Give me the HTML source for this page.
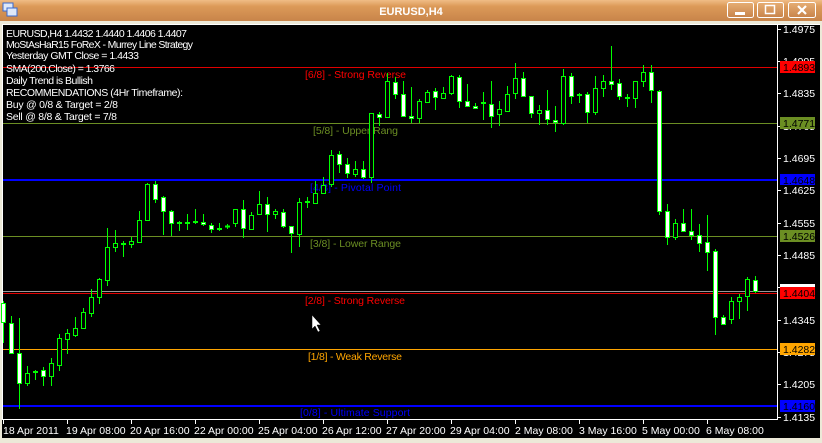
<!DOCTYPE html>
<html><head><meta charset="utf-8"><style>
html,body{margin:0;padding:0;background:#ece9d8;}
svg{display:block;font-family:"Liberation Sans",sans-serif;}
</style></head><body>
<svg width="822" height="443" viewBox="0 0 822 443" xmlns="http://www.w3.org/2000/svg">
<defs>
<linearGradient id="tb" x1="0" y1="0" x2="0" y2="1">
<stop offset="0" stop-color="#f0bd86"/><stop offset="0.3" stop-color="#dc9a58"/><stop offset="1" stop-color="#c8844a"/>
</linearGradient>
<linearGradient id="bt" x1="0" y1="0" x2="0" y2="1">
<stop offset="0" stop-color="#e6ae74"/><stop offset="1" stop-color="#c8834a"/>
</linearGradient>
</defs>
<rect x="0" y="0" width="822" height="443" fill="#ece9d8"/>
<rect x="0" y="0" width="822" height="21" fill="url(#tb)"/>
<!-- icon -->
<rect x="3" y="3" width="10" height="8" fill="#dfe8f8" stroke="#3a6ad0" stroke-width="1"/>
<rect x="7" y="8" width="10" height="8" fill="#dfe8f8" stroke="#3a6ad0" stroke-width="1"/>
<text x="411" y="15" fill="#fff" font-size="11" font-weight="bold" text-anchor="middle">EURUSD,H4</text>
<!-- buttons -->
<rect x="727.5" y="2.5" width="26" height="15" rx="2" fill="url(#bt)" stroke="#fff"/>
<rect x="735" y="12" width="10" height="3" fill="#fff"/>
<rect x="757.5" y="2.5" width="26" height="15" rx="2" fill="url(#bt)" stroke="#fff"/>
<rect x="765.5" y="5.5" width="9" height="8" fill="none" stroke="#fff" stroke-width="1.5"/>
<rect x="788.5" y="2.5" width="27" height="15" rx="2" fill="url(#bt)" stroke="#fff"/>
<path d="M798 6L806 14M806 6L798 14" stroke="#fff" stroke-width="2.2"/>
<!-- chart area -->
<rect x="2" y="24" width="818" height="414" fill="#000"/>
<path d="M2.5 24V420M2 24.5H820" stroke="#fff" stroke-width="1"/>
<path d="M777.5 25V420M2 419.5H778" stroke="#fff" stroke-width="1"/>
<!-- level lines -->
<g stroke-width="1">
<line x1="3" y1="67.5" x2="777" y2="67.5" stroke="#e00000"/>
<line x1="3" y1="123.5" x2="777" y2="123.5" stroke="#6b8e23"/>
<line x1="3" y1="180" x2="777" y2="180" stroke="#0000ff" stroke-width="2"/>
<line x1="3" y1="236.5" x2="777" y2="236.5" stroke="#6b8e23"/>
<line x1="3" y1="291.5" x2="777" y2="291.5" stroke="#999"/>
<line x1="3" y1="293.5" x2="777" y2="293.5" stroke="#e00000"/>
<line x1="3" y1="349.5" x2="777" y2="349.5" stroke="#ffa500"/>
<line x1="3" y1="406" x2="777" y2="406" stroke="#0000ff" stroke-width="2"/>
</g>
<!-- level labels -->
<g font-size="10.5">
<text x="305" y="78" fill="#ff0000" textLength="101">[6/8] - Strong Reverse</text>
<text x="313" y="134" fill="#6b8e23" textLength="85">[5/8] - Upper Rang</text>
<text x="310" y="191" fill="#0000ff" textLength="91">[4/8] - Pivotal Point</text>
<text x="310" y="247" fill="#6b8e23" textLength="91">[3/8] - Lower Range</text>
<text x="305" y="304" fill="#ff0000" textLength="100">[2/8] - Strong Reverse</text>
<text x="308" y="360" fill="#ffa500" textLength="94">[1/8] - Weak Reverse</text>
<text x="300" y="416" fill="#0000ff" textLength="110">[0/8] - Ultimate Support</text>
</g>
<!-- candles wicks -->
<path stroke="#00ff00" stroke-width="1" fill="none" d="M3.5 301V343M11.5 316V354M19.5 318V409M27.5 366V386M35.5 370V380M43.5 367V386M51.5 358V386M59.5 334V371M67.5 329V354M75.5 317V337M83.5 308V329M91.5 289V317M99.5 278V304M107.5 228V286M115.5 230V252M123.5 241V257M131.5 237V248M139.5 211V243M147.5 183V221M155.5 181V203M163.5 196V235M171.5 210V236M179.5 221V231M187.5 214V230M195.5 209V224M203.5 214V226M211.5 223V233M219.5 223V231M227.5 224V229M235.5 209V227M243.5 200V238M251.5 212V230M259.5 191V214M267.5 197V232M275.5 209V219M283.5 209V228M291.5 226V253M299.5 198V247M307.5 197V208M315.5 181V203M323.5 177V193M331.5 150V187M339.5 151V173M347.5 158V178M355.5 161V177M363.5 161V179M371.5 113V183M379.5 112V126M387.5 73V117M395.5 77V99M403.5 81V116M411.5 87V123M419.5 99V123M427.5 90V102M435.5 88V110M443.5 87V98M451.5 75V95M459.5 75V108M467.5 84V106M475.5 103V108M483.5 92V120M491.5 81V128M499.5 101V126M507.5 86V111M515.5 63V99M523.5 72V96M531.5 96V118M539.5 105V125M547.5 90V125M555.5 106V132M563.5 69V125M571.5 73V104M579.5 93V103M587.5 92V123M595.5 76V115M603.5 75V97M611.5 46V90M619.5 79V100M627.5 94V107M635.5 81V108M643.5 65V87M651.5 65V103M659.5 90V215M667.5 204V245M675.5 219V240M683.5 209V232M691.5 209V240M699.5 224V252M707.5 215V271M715.5 249V335M723.5 315V324M731.5 297V324M739.5 294V319M747.5 277V311M755.5 276V293"/>
<!-- bodies: green hollow -->
<g fill="#000" stroke="#00ff00" stroke-width="1">
<rect x="25.5" y="373.5" width="4" height="10"/>
<rect x="49.5" y="363.5" width="4" height="13"/>
<rect x="57.5" y="338.5" width="4" height="27"/>
<rect x="65.5" y="333.5" width="4" height="6"/>
<rect x="73.5" y="328.5" width="4" height="7"/>
<rect x="81.5" y="312.5" width="4" height="16"/>
<rect x="89.5" y="297.5" width="4" height="16"/>
<rect x="97.5" y="279.5" width="4" height="18"/>
<rect x="105.5" y="247.5" width="4" height="33"/>
<rect x="113.5" y="243.5" width="4" height="4"/>
<rect x="129.5" y="241.5" width="4" height="3"/>
<rect x="137.5" y="220.5" width="4" height="22"/>
<rect x="145.5" y="184.5" width="4" height="36"/>
<rect x="233.5" y="209.5" width="4" height="14"/>
<rect x="249.5" y="215.5" width="4" height="14"/>
<rect x="257.5" y="204.5" width="4" height="10"/>
<rect x="273.5" y="211.5" width="4" height="3"/>
<rect x="297.5" y="202.5" width="4" height="32"/>
<rect x="313.5" y="193.5" width="4" height="10"/>
<rect x="321.5" y="185.5" width="4" height="8"/>
<rect x="329.5" y="155.5" width="4" height="29"/>
<rect x="353.5" y="169.5" width="4" height="5"/>
<rect x="369.5" y="113.5" width="4" height="64"/>
<rect x="385.5" y="81.5" width="4" height="36"/>
<rect x="417.5" y="101.5" width="4" height="17"/>
<rect x="425.5" y="92.5" width="4" height="10"/>
<rect x="441.5" y="93.5" width="4" height="5"/>
<rect x="449.5" y="76.5" width="4" height="17"/>
<rect x="497.5" y="109.5" width="4" height="5"/>
<rect x="505.5" y="94.5" width="4" height="17"/>
<rect x="513.5" y="78.5" width="4" height="15"/>
<rect x="537.5" y="110.5" width="4" height="3"/>
<rect x="561.5" y="76.5" width="4" height="47"/>
<rect x="593.5" y="88.5" width="4" height="24"/>
<rect x="601.5" y="81.5" width="4" height="7"/>
<rect x="633.5" y="81.5" width="4" height="17"/>
<rect x="641.5" y="72.5" width="4" height="9"/>
<rect x="673.5" y="223.5" width="4" height="14"/>
<rect x="729.5" y="301.5" width="4" height="18"/>
<rect x="737.5" y="297.5" width="4" height="4"/>
<rect x="745.5" y="279.5" width="4" height="17"/>
</g>
<!-- flat green dojis -->
<path stroke="#00ff00" stroke-width="2" d="M33 372H38M121 244H126M177 223H182M185 223H190M193 222H198M217 229H222M225 226.5H230M305 202H310M481 103H486M577 95H582M625 98H630"/>
<!-- bodies: white -->
<g fill="#fff" stroke="#00ff00" stroke-width="1">
<rect x="1.5" y="303.5" width="4" height="19"/>
<rect x="9.5" y="323.5" width="4" height="30"/>
<rect x="17.5" y="353.5" width="4" height="30"/>
<rect x="41.5" y="370.5" width="4" height="6"/>
<rect x="153.5" y="184.5" width="4" height="15"/>
<rect x="161.5" y="197.5" width="4" height="14"/>
<rect x="169.5" y="211.5" width="4" height="12"/>
<rect x="201.5" y="222.5" width="4" height="2"/>
<rect x="209.5" y="225.5" width="4" height="4"/>
<rect x="241.5" y="209.5" width="4" height="19"/>
<rect x="265.5" y="204.5" width="4" height="10"/>
<rect x="281.5" y="212.5" width="4" height="14"/>
<rect x="289.5" y="226.5" width="4" height="7"/>
<rect x="337.5" y="154.5" width="4" height="10"/>
<rect x="345.5" y="164.5" width="4" height="9"/>
<rect x="361.5" y="169.5" width="4" height="8"/>
<rect x="377.5" y="114.5" width="4" height="3"/>
<rect x="393.5" y="82.5" width="4" height="12"/>
<rect x="401.5" y="94.5" width="4" height="22"/>
<rect x="409.5" y="116.5" width="4" height="2"/>
<rect x="433.5" y="91.5" width="4" height="6"/>
<rect x="457.5" y="77.5" width="4" height="24"/>
<rect x="465.5" y="101.5" width="4" height="5"/>
<rect x="473.5" y="106.5" width="4" height="2"/>
<rect x="489.5" y="104.5" width="4" height="12"/>
<rect x="521.5" y="78.5" width="4" height="18"/>
<rect x="529.5" y="96.5" width="4" height="17"/>
<rect x="545.5" y="110.5" width="4" height="9"/>
<rect x="553.5" y="120.5" width="4" height="2"/>
<rect x="569.5" y="76.5" width="4" height="20"/>
<rect x="585.5" y="94.5" width="4" height="18"/>
<rect x="609.5" y="81.5" width="4" height="3"/>
<rect x="617.5" y="83.5" width="4" height="13"/>
<rect x="649.5" y="72.5" width="4" height="18"/>
<rect x="657.5" y="91.5" width="4" height="120"/>
<rect x="665.5" y="211.5" width="4" height="26"/>
<rect x="681.5" y="223.5" width="4" height="8"/>
<rect x="689.5" y="231.5" width="4" height="4"/>
<rect x="697.5" y="235.5" width="4" height="8"/>
<rect x="705.5" y="242.5" width="4" height="10"/>
<rect x="713.5" y="251.5" width="4" height="66"/>
<rect x="721.5" y="317.5" width="4" height="7"/>
<rect x="753.5" y="280.5" width="4" height="11"/>
</g>
<!-- cursor -->
<path d="M312 315V329L315 326L318 332L320 331L317 325H321Z" fill="#fff" stroke="#000" stroke-width="0.5"/>
<!-- info text -->
<g fill="#fff" font-size="10.5">
<text x="6" y="37" textLength="181">EURUSD,H4  1.4432 1.4440 1.4406 1.4407</text>
<text x="6" y="48" textLength="187">MoStAsHaR15 FoReX - Murrey Line Strategy</text>
<text x="6" y="59" textLength="133">Yesterday GMT Close = 1.4433</text>
<text x="6" y="72" textLength="109">SMA(200,Close) = 1.3766</text>
<text x="6" y="84" textLength="87">Daily Trend is Bullish</text>
<text x="6" y="96" textLength="177">RECOMMENDATIONS (4Hr Timeframe):</text>
<text x="6" y="108" textLength="112">Buy  @ 0/8 &amp; Target = 2/8</text>
<text x="6" y="120" textLength="111">Sell @ 8/8 &amp; Target = 7/8</text>
</g>
<!-- price axis -->
<path stroke="#fff" stroke-width="1" d="M778 29.5H781M778 61.5H781M778 93.5H781M778 126.5H781M778 158.5H781M778 190.5H781M778 223.5H781M778 255.5H781M778 287.5H781M778 320.5H781M778 352.5H781M778 384.5H781M778 417.5H781"/>
<g fill="#fff" font-size="10.5">
<text x="783" y="33">1.4975</text>
<text x="783" y="65">1.4905</text>
<text x="783" y="97">1.4835</text>
<text x="783" y="130">1.4765</text>
<text x="783" y="162">1.4695</text>
<text x="783" y="194">1.4625</text>
<text x="783" y="227">1.4555</text>
<text x="783" y="259">1.4485</text>
<text x="783" y="291">1.4415</text>
<text x="783" y="324">1.4345</text>
<text x="783" y="356">1.4275</text>
<text x="783" y="388">1.4205</text>
<text x="783" y="421">1.4135</text>
</g>
<rect x="780" y="284" width="35" height="7" fill="#fff"/>
<g font-size="10.5" fill="#000">
<rect x="780" y="61" width="35" height="12" fill="#ff0000"/><text x="783" y="71">1.4893</text>
<rect x="780" y="117" width="35" height="12" fill="#6b8e23"/><text x="783" y="127">1.4771</text>
<rect x="780" y="174" width="35" height="11" fill="#0000ff"/><text x="783" y="184">1.4648</text>
<rect x="780" y="230" width="35" height="12" fill="#6b8e23"/><text x="783" y="240">1.4526</text>
<rect x="780" y="287" width="35" height="12" fill="#ff0000"/><text x="783" y="297">1.4404</text>
<rect x="780" y="343" width="35" height="12" fill="#ffa500"/><text x="783" y="353">1.4282</text>
<rect x="780" y="400" width="35" height="12" fill="#0000ff"/><text x="783" y="410">1.4160</text>
</g>
<!-- date axis -->
<path stroke="#fff" stroke-width="1" d="M3.5 420V424M67.5 420V424M131.5 420V424M195.5 420V424M259.5 420V424M323.5 420V424M387.5 420V424M451.5 420V424M515.5 420V424M579.5 420V424M643.5 420V424M707.5 420V424"/>
<g fill="#fff" font-size="10.5">
<text x="3" y="434">18 Apr 2011</text>
<text x="66" y="434">19 Apr 08:00</text>
<text x="130" y="434">20 Apr 16:00</text>
<text x="194" y="434">22 Apr 00:00</text>
<text x="258" y="434">25 Apr 04:00</text>
<text x="322" y="434">26 Apr 12:00</text>
<text x="386" y="434">27 Apr 20:00</text>
<text x="450" y="434">29 Apr 04:00</text>
<text x="515" y="434">2 May 08:00</text>
<text x="579" y="434">3 May 16:00</text>
<text x="642" y="434">5 May 00:00</text>
<text x="706" y="434">6 May 08:00</text>
</g>
</svg>
</body></html>
